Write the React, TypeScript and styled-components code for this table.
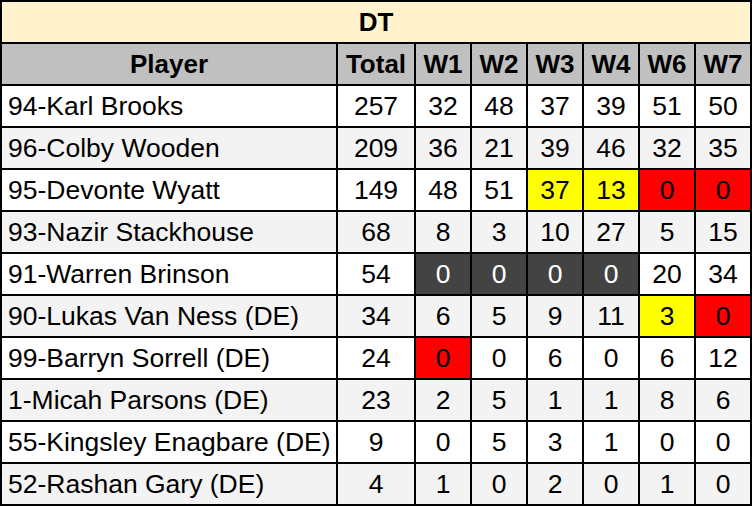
import styled, { createGlobalStyle } from "styled-components";

const GlobalStyle = createGlobalStyle`
    html, body {
        margin: 0;
        padding: 0;
        background: #ffffff;
    }
    body {
        font-family: "Liberation Sans", Arial, sans-serif;
    }
`

const Sheet = styled.div`
    display: grid;
    grid-template-columns: 334px 76px repeat(6, 54px);
    grid-auto-rows: 40px;
    gap: 2px;
    padding: 2px;
    width: 752px;
    box-sizing: border-box;
    background: #000000;
    color: #000000;
`

const Title = styled.div`
    grid-column: 1 / -1;
    display: flex;
    align-items: center;
    justify-content: center;
    background: #fff2cc;
    font-size: 26px;
    font-weight: bold;
`

const Head = styled.div`
    display: flex;
    align-items: center;
    justify-content: center;
    background: #c0c0c0;
    font-size: 26px;
    font-weight: bold;
`

type Tone = "plain" | "yellow" | "red" | "dark"

const TONES: Record<Tone, { bg: string, fg: string } | null> = {
    plain: null,
    yellow: { bg: "#ffff00", fg: "#000000" },
    red: { bg: "#ff0000", fg: "#000000" },
    dark: { bg: "#434343", fg: "#ffffff" },
}

const Cell = styled.div<{ $striped: boolean, $tone?: Tone, $left?: boolean }>`
    display: flex;
    align-items: center;
    justify-content: ${props => props.$left ? "flex-start" : "center"};
    padding: ${props => props.$left ? "0 0 0 6px" : "0"};
    background: ${props => TONES[props.$tone || "plain"]?.bg || (props.$striped ? "#f3f3f3" : "#ffffff")};
    color: ${props => TONES[props.$tone || "plain"]?.fg || "#000000"};
    font-size: 26.5px;
    white-space: nowrap;
    overflow: hidden;
`

interface IRow {
    player: string,
    total: number,
    weeks: number[],
    tones?: Partial<Record<number, Tone>>,
}

const WEEKS = ["W1", "W2", "W3", "W4", "W6", "W7"]

const ROWS: IRow[] = [
    { player: "94-Karl Brooks", total: 257, weeks: [32, 48, 37, 39, 51, 50] },
    { player: "96-Colby Wooden", total: 209, weeks: [36, 21, 39, 46, 32, 35] },
    { player: "95-Devonte Wyatt", total: 149, weeks: [48, 51, 37, 13, 0, 0], tones: { 2: "yellow", 3: "yellow", 4: "red", 5: "red" } },
    { player: "93-Nazir Stackhouse", total: 68, weeks: [8, 3, 10, 27, 5, 15] },
    { player: "91-Warren Brinson", total: 54, weeks: [0, 0, 0, 0, 20, 34], tones: { 0: "dark", 1: "dark", 2: "dark", 3: "dark" } },
    { player: "90-Lukas Van Ness (DE)", total: 34, weeks: [6, 5, 9, 11, 3, 0], tones: { 4: "yellow", 5: "red" } },
    { player: "99-Barryn Sorrell (DE)", total: 24, weeks: [0, 0, 6, 0, 6, 12], tones: { 0: "red" } },
    { player: "1-Micah Parsons (DE)", total: 23, weeks: [2, 5, 1, 1, 8, 6] },
    { player: "55-Kingsley Enagbare (DE)", total: 9, weeks: [0, 5, 3, 1, 0, 0] },
    { player: "52-Rashan Gary (DE)", total: 4, weeks: [1, 0, 2, 0, 1, 0] },
]

const App = () => {
    return (
        <>
            <GlobalStyle />
            <Sheet>
                <Title>DT</Title>
                <Head>Player</Head>
                <Head>Total</Head>
                {WEEKS.map((w) => <Head key={w}>{w}</Head>)}
                {
                    ROWS.map((row, i) => {
                        const striped = i % 2 === 1
                        return [
                            <Cell key={row.player} $striped={striped} $left>{row.player}</Cell>,
                            <Cell key={row.player + "-total"} $striped={striped}>{row.total}</Cell>,
                            ...row.weeks.map((value, j) => (
                                <Cell key={row.player + j} $striped={striped} $tone={row.tones?.[j]}>{value}</Cell>
                            )),
                        ]
                    })
                }
            </Sheet>
        </>
    )
}

export default App
